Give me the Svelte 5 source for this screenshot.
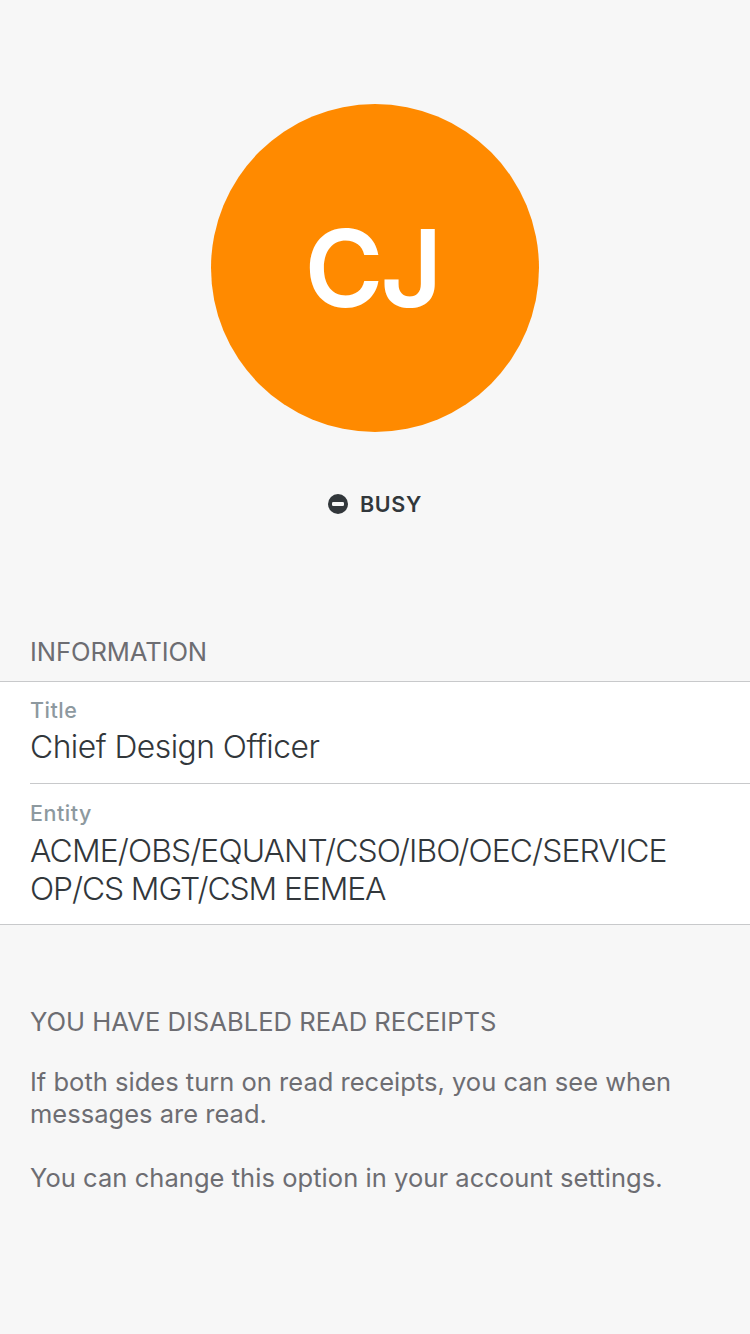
<script>
  const rows = [
    { label: 'Title', lines: [{ text: 'Chief Design Officer', tracking: -0.52 }] },
    {
      label: 'Entity',
      lines: [
        { text: 'ACME/OBS/EQUANT/CSO/IBO/OEC/SERVICE', tracking: -0.87 },
        { text: 'OP/CS MGT/CSM EEMEA', tracking: -1.08 }
      ]
    }
  ];
</script>

<main>
  <section class="profile">
    <div class="avatar"><span>CJ</span></div>
    <div class="status">
      <svg width="20" height="20" viewBox="0 0 20 20"><circle cx="10" cy="10" r="10" fill="#32373b"/><rect x="4" y="8" width="12" height="4" rx="1.3" fill="#f7f7f7"/></svg>
      <span>BUSY</span>
    </div>
  </section>
  <h2>INFORMATION</h2>
  <section class="card">
    {#each rows as row}
      <div class="row">
        <div class="label">{row.label}</div>
        <div class="value">
          {#each row.lines as line}
            <div style:letter-spacing="{line.tracking}px">{line.text}</div>
          {/each}
        </div>
      </div>
    {/each}
  </section>
  <section class="receipts">
    <h3>YOU HAVE DISABLED READ RECEIPTS</h3>
    <p>If both sides turn on read receipts, you can see when<br />messages are read.</p>
    <p class="settings">You can change this option in your account settings.</p>
  </section>
</main>

<style>
  :global(body) { margin: 0; background: #f7f7f7; }
  main { box-sizing: border-box; height: 1334px; padding-top: 104px; background: #f7f7f7; color: #6d6d72; font-family: Inter, sans-serif; overflow: hidden; }
  .profile { height: 526px; display: flex; flex-direction: column; align-items: center; }
  .avatar { box-sizing: border-box; width: 328px; height: 328px; padding: 0 6px 0 0; border-radius: 50%; background: #ff8a00; color: #fff; display: flex; align-items: center; justify-content: center; font-size: 107px; font-weight: 590; line-height: 128px; letter-spacing: -3px; }
  .status { margin-top: 56px; height: 32px; display: flex; align-items: center; gap: 12px; color: #32373b; font-size: 21.5px; font-weight: 580; letter-spacing: 0.7px; }
  h2, h3 { margin: 0; font-size: 25.6px; font-weight: 380; line-height: 32px; letter-spacing: 0; }
  h2 { height: 51px; padding: 6px 30px 0; box-sizing: border-box; letter-spacing: -0.1px; }
  .card { background: #fff; border-top: 1px solid #c8c9cb; border-bottom: 1px solid #c8c9cb; height: 242px; }
  .row { margin-left: 30px; padding-top: 14px; box-sizing: border-box; }
  .row:first-child { height: 102px; border-bottom: 1px solid #c8c9cb; }
  .row:last-child { padding-top: 15px; }
  .label { font-size: 21.5px; line-height: 28px; color: #8d999f; font-weight: 480; letter-spacing: 0.5px; }
  .value { margin-top: 4px; font-size: 31.8px; font-weight: 270; line-height: 38px; color: #32373b; white-space: nowrap; }
  .row:last-child .value { margin-top: 5px; }
  .receipts { padding: 81px 30px 0; }
  p { margin: 28px 0 0; font-size: 25.5px; font-weight: 390; line-height: 32px; letter-spacing: 0.01px; white-space: nowrap; }
  p + p { margin-top: 32px; }
  .settings { letter-spacing: 0.05px; }
</style>
